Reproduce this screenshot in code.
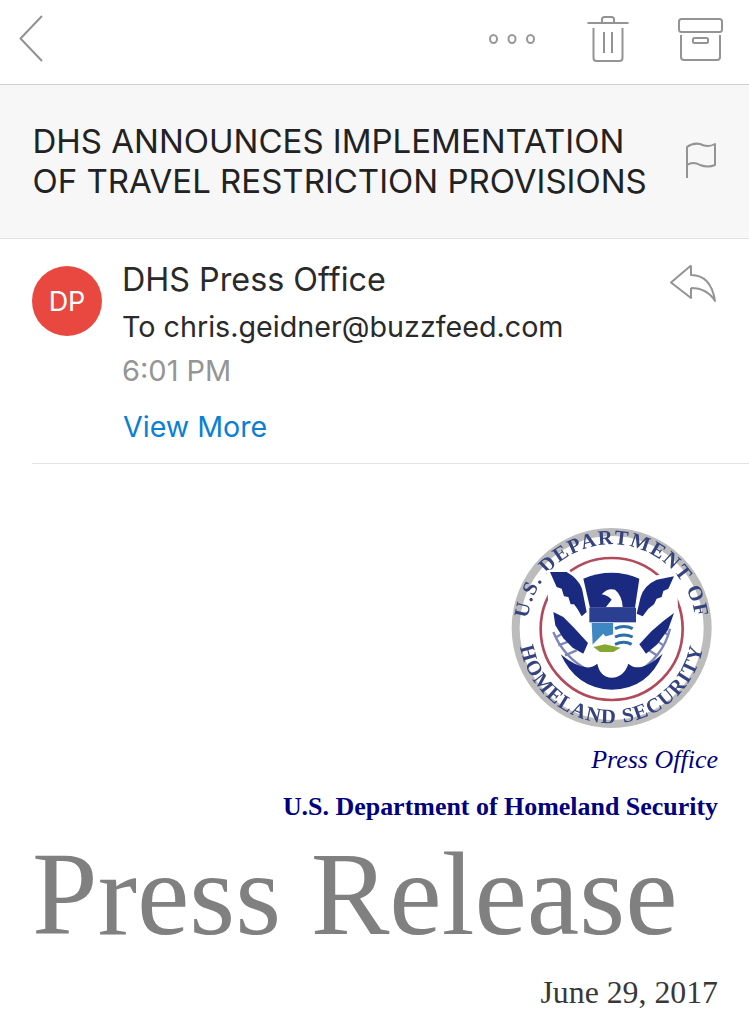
<div class="page">
  <header class="toolbar">
    <svg class="back" width="26" height="48" viewBox="0 0 26 48"><path d="M23 1 L1.500 23.500 L23 46" /></svg>
    <div class="actions">
      <svg class="more" width="48" height="14" viewBox="0 0 48 14">
        <ellipse cx="5.500" cy="7" rx="3.500" ry="4" /><ellipse cx="24" cy="7" rx="3.500" ry="4" /><ellipse cx="42.500" cy="7" rx="3.500" ry="4" />
      </svg>
      <svg class="trash" width="42" height="48" viewBox="0 0 42 48">
        <path d="M0.500 7 H41.500 M15 7 V3.500 Q15 1 17.500 1 H24.500 Q27 1 27 3.500 V7 M6.500 12 V42 Q6.500 45 9.500 45 H32.500 Q35.500 45 35.500 42 V12 M17 16 V37 M25 16 V37" />
      </svg>
      <svg class="archive" width="46" height="44" viewBox="0 0 46 44">
        <rect x="1" y="1" width="43" height="13" rx="2.500" />
        <path d="M3 17 V39 Q3 42 6 42 H39 Q42 42 42 39 V17" />
        <rect x="15" y="20" width="15" height="5" rx="1.500" />
      </svg>
    </div>
  </header>

  <section class="subject">
    <h1>DHS ANNOUNCES IMPLEMENTATION OF TRAVEL RESTRICTION PROVISIONS</h1>
    <svg class="flag" width="32" height="38" viewBox="0 0 32 38">
      <path d="M2 36 V5 Q8 0.500 15 2 Q23 6 30 2 V23 Q23 26 15 23 Q8 19 2 23" />
    </svg>
  </section>

  <section class="sender">
    <div class="avatar">DP</div>
    <div class="meta">
      <div class="name">DHS Press Office</div>
      <div class="to">To chris.geidner@buzzfeed.com</div>
      <div class="time">6:01 PM</div>
      <div class="view">View More</div>
    </div>
    <svg class="reply" width="48" height="40" viewBox="0 0 48 40">
      <path d="M22 1.500 L2 18.500 L22 34 V24 M22 1.500 V11 Q42 11 46 37 Q38 24 22 24" />
    </svg>
  </section>

  <main class="body">
    <svg class="seal" width="225" height="225" viewBox="0 0 675 675">
      <defs>
        <path id="arcTop" d="M 88 390 A 253 253 0 1 1 582 390" />
        <path id="arcBottom" d="M 56 340 A 279 279 0 0 0 614 340" />
      </defs>
      <circle cx="335" cy="333" r="288" fill="#fff" stroke="#bcbcbc" stroke-width="24" />
      <circle cx="335" cy="336" r="213" fill="#fff" stroke="#b04a5c" stroke-width="8" />
      <text class="ring-text"><textPath href="#arcTop" startOffset="50%" text-anchor="middle">U.S. DEPARTMENT OF</textPath></text>
      <text class="ring-text"><textPath href="#arcBottom" startOffset="50%" text-anchor="middle">HOMELAND SECURITY</textPath></text>

      <path fill="#fff" d="M140 160 L200 150 L250 210 L420 210 L470 175 L530 170 L535 300 L520 380 L440 470 L230 470 L150 380 Z" />
      <path class="leaf" d="M160 345 Q190 420 265 460 M175 385 L210 372 M195 415 L230 400 M170 360 L195 345 M510 335 Q490 420 405 470 M490 385 L462 365 M470 415 L440 395 M505 355 L480 335" />
      <path class="navy" d="M160 285 L190 300 L222 332 L264 378 L250 410 L218 392 L190 364 L166 325 Z" />
      <path class="navy" d="M522 288 L490 312 L455 342 L418 382 L438 410 L472 382 L504 338 Z" />
      <path class="navy" d="M182 412 Q255 472 292 440 Q300 480 335 482 Q372 480 385 440 Q420 472 488 410 Q445 516 335 518 Q230 516 182 412 Z" />
      <path class="navy" d="M150 165 L200 165 Q235 185 246 215 L260 285 L245 298 L232 275 L222 262 L212 262 L205 240 L192 238 L185 215 L170 210 Z" />
      <path class="navy" d="M522 178 L470 188 Q432 205 422 240 L410 290 L428 298 L445 275 L462 262 L470 245 L485 240 L490 222 L505 215 Z" />
      <path class="navy" d="M250 185 Q335 150 418 185 L405 272 H270 Z" />
      <path class="white" d="M305 232 Q322 212 345 218 Q366 235 368 270 H318 L335 248 Q325 236 305 232 Z" />
      <rect x="268" y="272" width="140" height="44" fill="#2b3f92" />
      <path fill="#3f87c2" d="M275 318 H340 V352 L310 360 L278 385 Z" />
      <path fill="#fff" d="M340 318 H402 V395 L385 408 H340 Z" />
      <path class="wave" d="M345 335 Q372 322 398 335 M345 360 Q372 348 398 360 M345 382 Q372 370 395 382" />
      <path fill="#fff" d="M250 410 L310 350 L345 395 L420 420 L335 425 Z" />
      <path fill="#84a832" d="M280 390 L315 382 L362 392 L340 405 L300 405 Z" />
    </svg>
    <div class="office">Press Office</div>
    <div class="dept">U.S. Department of Homeland Security</div>
    <div class="release">Press Release</div>
    <div class="date">June 29, 2017</div>
  </main>
</div>

<style>
  :global(body) { margin: 0; background: #fff; }
  .page { width: 749px; height: 1017px; overflow: hidden; background: #fff; font-family: Inter, "Liberation Sans", sans-serif; }
  svg { display: block; fill: none; }
  svg path, svg ellipse, svg rect { stroke-linejoin: round; }
  .toolbar { height: 84px; border-bottom: 1px solid #cfcfcf; display: flex; justify-content: space-between; padding: 0 25px 0 19px; }
  .back { margin-top: 15px; }
  .back path { stroke: #929292; stroke-width: 2; }
  .actions { display: flex; align-items: flex-start; }
  .more { margin: 32px 0 0 0; }
  .more ellipse { stroke: #979797; stroke-width: 2; }
  .trash { margin: 16px 0 0 51px; }
  .trash path { stroke: #949494; stroke-width: 2; }
  .archive { margin: 18px 0 0 49px; }
  .archive rect, .archive path { stroke: #949494; stroke-width: 2; }
  .subject { height: 154px; box-sizing: border-box; background: #f7f7f7; border-bottom: 1px solid #e2e2e2; display: flex; justify-content: space-between; padding: 36px 32px 0 32.500px; }
  h1 { margin: 0; width: 625px; font-size: 33px; line-height: 40px; font-weight: 400; color: #222; }
  .flag { margin-top: 21px; }
  .flag path { stroke: #949494; stroke-width: 2; }
  .sender { height: 225px; box-sizing: border-box; margin-left: 32px; border-bottom: 1px solid #e4e4e4; display: flex; padding: 24px 32px 0 0; }
  .avatar { width: 70px; height: 70px; margin-top: 3px; border-radius: 50%; background: #e8483f; color: #fff; font-size: 27px; display: flex; align-items: center; justify-content: center; flex: none; }
  .meta { margin: -1px 0 0 20px; flex: 1; }
  .name { font-size: 32.300px; line-height: 36px; color: #2a2a2a; }
  .to { font-size: 28.700px; line-height: 36px; margin-top: 11px; color: #2a2a2a; }
  .time { font-size: 29px; line-height: 36px; margin-top: 8px; color: #959595; }
  .view { font-size: 28.600px; line-height: 36px; margin: 20px 0 0 1px; color: #0a7fd3; }
  .reply { margin-top: 1px; }
  .reply path { stroke: #949494; stroke-width: 2; }
  .body { padding: 53px 31px 0 32px; display: flex; flex-direction: column; align-items: flex-end; }
  .seal { margin-right: -7px; filter: blur(0.5px); }
  .seal .navy { fill: #1a2a80; stroke: none; }
  .seal .white { fill: #fff; stroke: none; }
  .seal .leaf { stroke: #7d86b8; stroke-width: 7; fill: none; }
  .seal .wave { stroke: #2b6ea8; stroke-width: 9; fill: none; }
  .ring-text { font-family: "Liberation Serif", serif; font-size: 62px; font-weight: 700; fill: #34427e; letter-spacing: 4px; }
  .office { font-family: "Liberation Serif", serif; font-style: italic; font-size: 26px; line-height: 30px; color: #00007f; margin-top: 3px; }
  .dept { font-family: "Liberation Serif", serif; font-weight: 700; font-size: 25.950px; line-height: 30px; color: #00007f; margin-top: 17px; }
  .release { font-family: "Liberation Serif", serif; font-size: 118px; line-height: 130px; color: #808080; align-self: flex-start; margin-top: 8px; white-space: nowrap; }
  .date { font-family: "Liberation Serif", serif; font-size: 31.800px; line-height: 36px; color: #383838; margin-top: 15px; }
</style>
